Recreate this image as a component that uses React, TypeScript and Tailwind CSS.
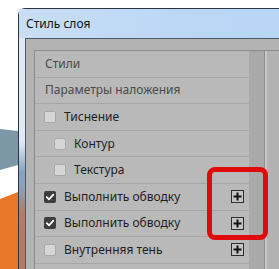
import React from 'react';

type Row = {
  label: string;
  kind: 'header' | 'item';
  checked?: boolean;
  indent?: boolean;
  plus?: boolean;
};

const rows: Row[] = [
  { label: 'Стили', kind: 'header' },
  { label: 'Параметры наложения', kind: 'header' },
  { label: 'Тиснение', kind: 'item' },
  { label: 'Контур', kind: 'item', indent: true },
  { label: 'Текстура', kind: 'item', indent: true },
  { label: 'Выполнить обводку', kind: 'item', checked: true, plus: true },
  { label: 'Выполнить обводку', kind: 'item', checked: true, plus: true },
  { label: 'Внутренняя тень', kind: 'item', plus: true },
  { label: '', kind: 'item' },
];

const Checkbox: React.FC<{ checked?: boolean }> = ({ checked }) =>
  checked ? (
    <div className="w-[12px] h-[12px] rounded-[2px] bg-[#3d3d3d] flex items-center justify-center shrink-0">
      <svg width="10" height="10" viewBox="0 0 10 10">
        <path d="M1.8 5.2 L4 7.3 L8.3 2.6" stroke="#ffffff" strokeWidth="1.8" fill="none" strokeLinecap="round" strokeLinejoin="round" />
      </svg>
    </div>
  ) : (
    <div className="w-[12px] h-[12px] rounded-[2px] bg-[#d6d6d6] border border-[#a8a8a8] shrink-0" />
  );

const PlusBox = () => (
  <div className="w-[13px] h-[13px] border border-[#2e2e2e] bg-[#c4c4c4] flex items-center justify-center">
    <svg width="9" height="9" viewBox="0 0 9 9">
      <path d="M4.5 0.5 V8.5 M0.5 4.5 H8.5" stroke="#111111" strokeWidth="2" />
    </svg>
  </div>
);

// backdrop picture to the left of the dialog
const Backdrop = () => (
  <svg width="18" height="269" viewBox="0 0 18 269" className="shrink-0 -mt-[8px]">
    <rect width="18" height="269" fill="#ffffff" />
    <polygon points="0,129 18,131 18,165 0,170" fill="#7d97a6" />
    <polygon points="0,199 18,192 18,269 0,269" fill="#e8772a" />
  </svg>
);

export default function App() {
  return (
    <div
      className="relative w-[279px] h-[269px] overflow-hidden bg-white pt-[8px] flex"
      style={{ fontFamily: '"Noto Sans", "DejaVu Sans", sans-serif' }}
    >
      <Backdrop />

      {/* dialog window */}
      <div className="flex-1 flex flex-col border-l border-t border-[#2d3640] rounded-tl-[7px] bg-[#c2dbf5]">
        <div className="h-[29px] shrink-0 flex items-center pl-[7px] text-[12px] text-[#111] bg-[linear-gradient(to_right,#c9def4,#bcd7f5_60%,#b9d6f7)]">
          Стиль слоя
        </div>

        <div className="flex-1 flex min-h-0">
          {/* left frame */}
          <div className="w-[6px] shrink-0 bg-[linear-gradient(to_bottom,#dde9f6_0%,#dfeaf6_45%,#86a4c2_58%,#8aa3bb_64%,#b27c66_76%,#b47a62_100%)]" />

          {/* client area */}
          <div className="flex-1 border-l border-t border-[#4b5866] bg-[#b3b3b3] pl-[8px] pt-[11px] min-w-0">
            <div className="flex border-l border-t border-[#8c8c8c] h-[260px]">
              <div className="w-[214px] shrink-0 bg-[#b9b9b9] flex flex-col">
                {rows.map((r, i) => (
                  <div
                    key={i}
                    className={`h-[26.6px] shrink-0 flex items-center border-b border-[#a6a6a6] text-[12px] ${
                      r.kind === 'header' ? 'pl-[10px] text-[#4a4a4a]' : r.indent ? 'pl-[19px] text-[#1e1e1e]' : 'pl-[9px] text-[#1e1e1e]'
                    }`}
                  >
                    {r.kind === 'item' && <Checkbox checked={r.checked} />}
                    {r.label && <span className={r.kind === 'item' ? 'ml-[8px]' : ''}>{r.label}</span>}
                    {r.plus && (
                      <div className="ml-auto mr-[5px]">
                        <PlusBox />
                      </div>
                    )}
                  </div>
                ))}
              </div>
              <div className="w-[16px] shrink-0 bg-[#a9a9a9] border-r border-[#8e8e8e]" />
              <div className="w-[2px] shrink-0 bg-[#c6c6c6]" />
              <div className="flex-1 bg-[#b2b2b2]" />
            </div>
          </div>
        </div>
      </div>

      {/* red annotation */}
      <div className="absolute left-[207px] top-[167px] w-[61px] h-[73px] border-[5px] border-[#e10a0a] rounded-[8px]" />
    </div>
  );
}
